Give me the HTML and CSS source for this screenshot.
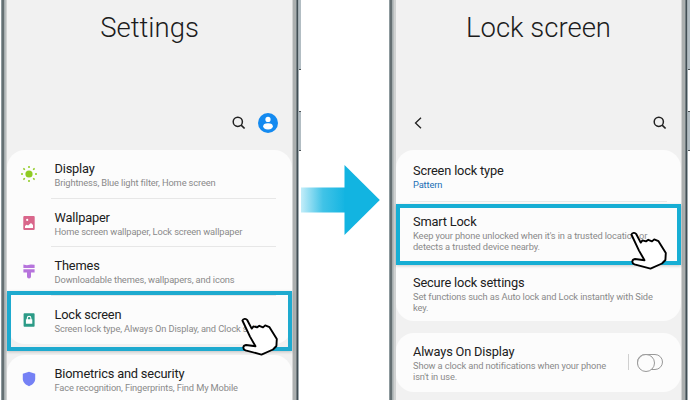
FILE: index.html
```
<!DOCTYPE html>
<html lang="en">
<head>
<meta charset="utf-8">
<title>Smart Lock settings</title>
<link rel="stylesheet" href="styles.css">
</head>
<body>
<svg class="defs" width="0" height="0">
  <symbol id="hand" viewBox="0 0 39 39">
    <path d="M2.4 3.5C3.2 1.6 6 1.2 7.2 3L11.7 11.6L13.5 9.4L17 10.4L19.3 8.8L23 10.4L25.2 8.4L29.5 10.2L36.8 22L36.4 29L33 32.5L21.5 37.6L5.5 33.3C2.3 32 2.8 28.5 6 28L15.5 29.2L10 19.6Z" fill="#fff" stroke="#000" stroke-width="1.9" stroke-linejoin="round"/>
  </symbol>
  <symbol id="search" viewBox="0 0 14 14">
    <circle cx="5.8" cy="5.8" r="4.6" fill="none" stroke="#222" stroke-width="1.5"/>
    <path d="M9.1 9.1L12.6 12.5" stroke="#222" stroke-width="1.7"/>
  </symbol>
</svg>
<main class="stage">
  <section class="phone">
    <div class="edge left"></div>
    <div class="screen">
      <h1 class="heading">Settings</h1>
      <div class="toolbar end">
        <svg class="search"><use href="#search"/></svg>
        <svg class="avatar" viewBox="0 0 20 20"><circle cx="10" cy="10" r="10" fill="#148af0"/><circle cx="10" cy="6.4" r="2.6" fill="#fff"/><ellipse cx="10" cy="13.3" rx="4.8" ry="3.1" fill="#fff"/></svg>
      </div>
      <div class="card">
        <div class="row">
          <svg class="icon" viewBox="0 0 16 16"><circle cx="8" cy="8" r="3.6" fill="#8fcb22"/><path d="M8 0v2M8 14v2M0 8h2M14 8h2M2.4 2.4l1.4 1.4M12.2 12.2l1.4 1.4M2.4 13.6l1.4-1.4M12.2 3.8l1.4-1.4" stroke="#8fcb22" stroke-width="1.5"/></svg>
          <div class="text"><h2>Display</h2><p>Brightness, Blue light filter, Home screen</p></div>
        </div>
        <div class="row">
          <svg class="icon" viewBox="0 0 16 16"><rect x="2.3" y="1" width="11.4" height="14" rx="1" fill="#d9668b"/><circle cx="6.2" cy="4.9" r="1.1" fill="#fff"/><path d="M4 13v-2l1.6-1.3 1.5.8L10 7.9l2 2.2V13z" fill="#fff"/></svg>
          <div class="text"><h2>Wallpaper</h2><p>Home screen wallpaper, Lock screen wallpaper</p></div>
        </div>
        <div class="row">
          <svg class="icon" viewBox="0 0 16 16"><path d="M2.4 1.6l3.5.7 4-.9 3.700.3V5H2.4zM2.400 6.2h11.2v3.2H10v4.2a2 2 0 0 1-4 0V9.4H2.4z" fill="#b674dc"/></svg>
          <div class="text"><h2>Themes</h2><p>Downloadable themes, wallpapers, and icons</p></div>
        </div>
        <div class="row last">
          <svg class="icon" viewBox="0 0 16 16"><rect x="2.6" y="1.2" width="11" height="13.6" rx=".8" fill="#2c9b87"/><path d="M6.3 8V6.2a1.8 1.8 0 0 1 3.6 0V8" fill="none" stroke="#fff" stroke-width="1.1"/><rect x="4.9" y="7.3" width="6.4" height="4.5" rx=".4" fill="#fff"/></svg>
          <div class="text"><h2>Lock screen</h2><p>Screen lock type, Always On Display, and Clock style</p></div>
          <div class="highlight"></div>
          <svg class="hand"><use href="#hand"/></svg>
        </div>
      </div>
      <div class="card next">
        <div class="row">
          <svg class="icon" viewBox="0 0 16 16"><path d="M8 .8l6.2 2v5c0 3.7-2.7 6-6.2 7.4C4.500 13.800 1.800 11.500 1.800 7.800v-5z" fill="#7581f5"/></svg>
          <div class="text"><h2>Biometrics and security</h2><p>Face recognition, Fingerprints, Find My Mobile</p></div>
        </div>
      </div>
    </div>
    <div class="edge right"></div>
    <div class="buttons"><i class="volume"></i><i class="power"></i></div>
  </section>

  <svg class="arrow" viewBox="1 0 90 80">
    <defs><linearGradient id="fade"><stop offset="0" stop-color="#c9effa"/><stop offset=".5" stop-color="#41c3e7"/><stop offset="1" stop-color="#12b4e1"/></linearGradient></defs>
    <path d="M0 22.500h46v25H0z" fill="url(#fade)"/>
    <path d="M44.500 0L79.800 35L44.500 70z" fill="#12b4e1"/>
  </svg>

  <section class="phone second">
    <div class="edge left"></div>
    <div class="screen">
      <h1 class="heading">Lock screen</h1>
      <div class="toolbar">
        <svg class="back" viewBox="0 0 8 12"><path d="M7 .8L1.500 6L7 11.200" fill="none" stroke="#222" stroke-width="1.3"/></svg>
        <svg class="search"><use href="#search"/></svg>
      </div>
      <div class="card options">
        <div class="option type"><h2>Screen lock type</h2><p class="value">Pattern</p></div>
        <div class="option smart">
          <h2>Smart Lock</h2><p>Keep your phone unlocked when it's in a trusted location or<br>detects a trusted device nearby.</p>
          <div class="highlight"></div>
          <svg class="hand"><use href="#hand"/></svg>
        </div>
        <div class="option secure"><h2>Secure lock settings</h2><p>Set functions such as Auto lock and Lock instantly with Side<br>key.</p></div>
      </div>
      <div class="card options aod">
        <div class="option"><h2>Always On Display</h2><p>Show a clock and notifications when your phone<br>isn't in use.</p></div>
        <div class="control"><span class="switch"></span></div>
      </div>
    </div>
    <div class="edge right"></div>
    <div class="buttons"><i class="volume"></i><i class="power"></i></div>
  </section>
</main>
</body>
</html>
```
FILE: styles.css
```
* { box-sizing: border-box; }
body { margin: 0; background: #fff; font-family: Roboto, sans-serif; overflow: hidden; }
h1, h2, p { margin: 0; font-weight: 400; white-space: nowrap; }
svg { display: block; flex: none; }
.defs { position: absolute; }
.stage { width: 690px; height: 400px; display: flex; padding-left: 1px; overflow: hidden; }
.phone { width: 300px; height: 400px; display: flex; flex: none; }
.edge { width: 6px; flex: none; }
.left { background: linear-gradient(90deg, #8d999d 0 1px, #657073 1px 3px, #a4acae 3px 4px, #b8bdbd 4px 5px, #d0d2d2 5px); }
.right { width: 7px; background: linear-gradient(90deg, #d2d3d3 0 1px, #abafaf 1px 4px, #737e82 4px 5px, #424e54 5px 6px, #a2adb2 6px); }
.screen { width: 285px; flex: none; background: #f1f1f1; display: flex; flex-direction: column; }
.buttons { width: 2px; flex: none; display: flex; flex-direction: column; gap: 41px; }
.buttons i { background: #b2bdc3; border-bottom: 1px solid #4b5357; }
.volume { height: 70px; }
.power { height: 40px; border-top: 1px solid #4b5357; }
.heading { flex: none; height: 109px; padding-top: 10px; text-align: center; font-size: 27.5px; line-height: 35px; font-weight: 300; color: #1c1c1c; }
.toolbar { flex: none; height: 41px; padding: 0 14px 14px 18px; display: flex; align-items: center; justify-content: space-between; }
.toolbar.end { justify-content: flex-end; gap: 12px; padding-right: 14.5px; }
.search { width: 14px; height: 14px; }
.avatar { width: 20px; height: 20px; }
.back { width: 8px; height: 12px; }
.card { background: #fcfcfc; border-radius: 18px; flex: none; }
.row { position: relative; height: 48.5px; display: flex; padding-left: 14px; }
.icon { width: 16px; height: 16px; margin-top: 16px; }
.text { width: 225px; margin-left: 14px; padding: 11px 0 0 3.5px; border-bottom: 1px solid #e7e7e7; }
.last .text { border: 0; }
h2 { font-size: 12.8px; letter-spacing: -.17px; line-height: 16px; color: #202020; }
p { font-size: 9.3px; letter-spacing: -.13px; line-height: 11px; color: #8a8a8a; }
.next { margin-top: 11px; height: 60px; }
.next .text { border: 0; }
.highlight { position: absolute; left: 0; right: 0; top: -4.5px; height: 60px; border: 4px solid #1eaacf; box-shadow: 0 1px 3px #0003; }
.hand { position: absolute; left: 232.5px; top: 21.5px; width: 39px; height: 39px; }
.arrow { width: 90px; height: 80px; margin: 165px -2px 0 0; }
.second { width: 302px; }
.second .left { width: 7px; }
.options { height: 171px; }
.option { position: relative; padding-left: 17px; }
.type { height: 52px; padding-top: 12.5px; }
.type::after { content: ""; display: block; height: 1px; width: 257px; margin: 11px 0 0 -3px; background: #e8e8e8; }
.value { color: #1b6fb5; }
.smart { height: 60px; padding-top: 11.5px; }
.smart .highlight { top: 2px; height: 61px; border-color: #17aed4; }
.smart .hand { top: 28.5px; left: 232.5px; }
.secure { padding-top: 12.5px; }
.aod { height: 59px; margin-top: 12px; display: flex; padding-top: 11px; }
.control { margin-left: auto; margin-right: 18px; margin-top: 10px; height: 16px; padding-left: 8px; border-left: 1px solid #d0d0d0; }
.switch { display: block; width: 26px; height: 16px; border: 1px solid #999; border-radius: 8px; }
.switch::before { content: ""; display: block; width: 16px; height: 16px; margin: -1px; border: 1px solid #999; border-radius: 50%; background: #fcfcfc; }
```
